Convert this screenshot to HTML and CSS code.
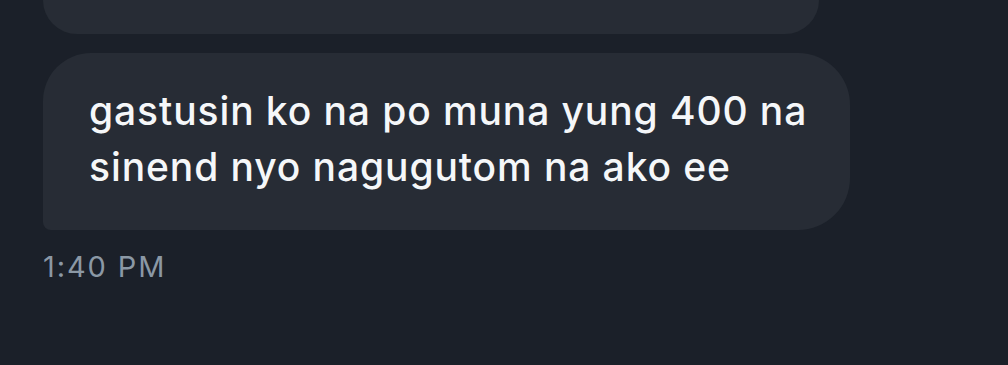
FILE: index.html
```html
<!DOCTYPE html>
<html lang="tl">
<head>
<meta charset="utf-8">
<title>Message</title>
<link rel="stylesheet" href="styles.css">
</head>
<body>
<div class="thread">
  <div class="bubble bubble-prev"></div>
  <div class="bubble bubble-last">
    <p class="msg">gastusin ko na po muna yung 400 na sinend nyo nagugutom na ako ee</p>
  </div>
  <div class="time">1:40 PM</div>
</div>
</body>
</html>
```

FILE: styles.css
```css
html, body {
  margin: 0;
  padding: 0;
  background: #1b2029;
}

.thread {
  display: flex;
  flex-direction: column;
  align-items: flex-start;
  padding-left: 43px;
  font-family: Inter, "Noto Sans", sans-serif;
}

.bubble {
  background: #272c35;
  box-sizing: border-box;
}

.bubble-prev {
  width: 776px;
  height: 34px;
  border-radius: 0 0 48px 48px;
}

.bubble-last {
  margin-top: 19px;
  width: 807px;
  height: 177px;
  padding: 30px 24px 0 46px;
  border-radius: 48px 52px 52px 8px;
}

.msg {
  margin: 0;
  color: #f5f7f9;
  font-size: 39px;
  font-weight: 500;
  line-height: 56px;
  letter-spacing: 0.9px;
}

.time {
  margin-top: 19px;
  color: #8b98a5;
  font-size: 29px;
  line-height: 36px;
  letter-spacing: 1.9px;
}
```
